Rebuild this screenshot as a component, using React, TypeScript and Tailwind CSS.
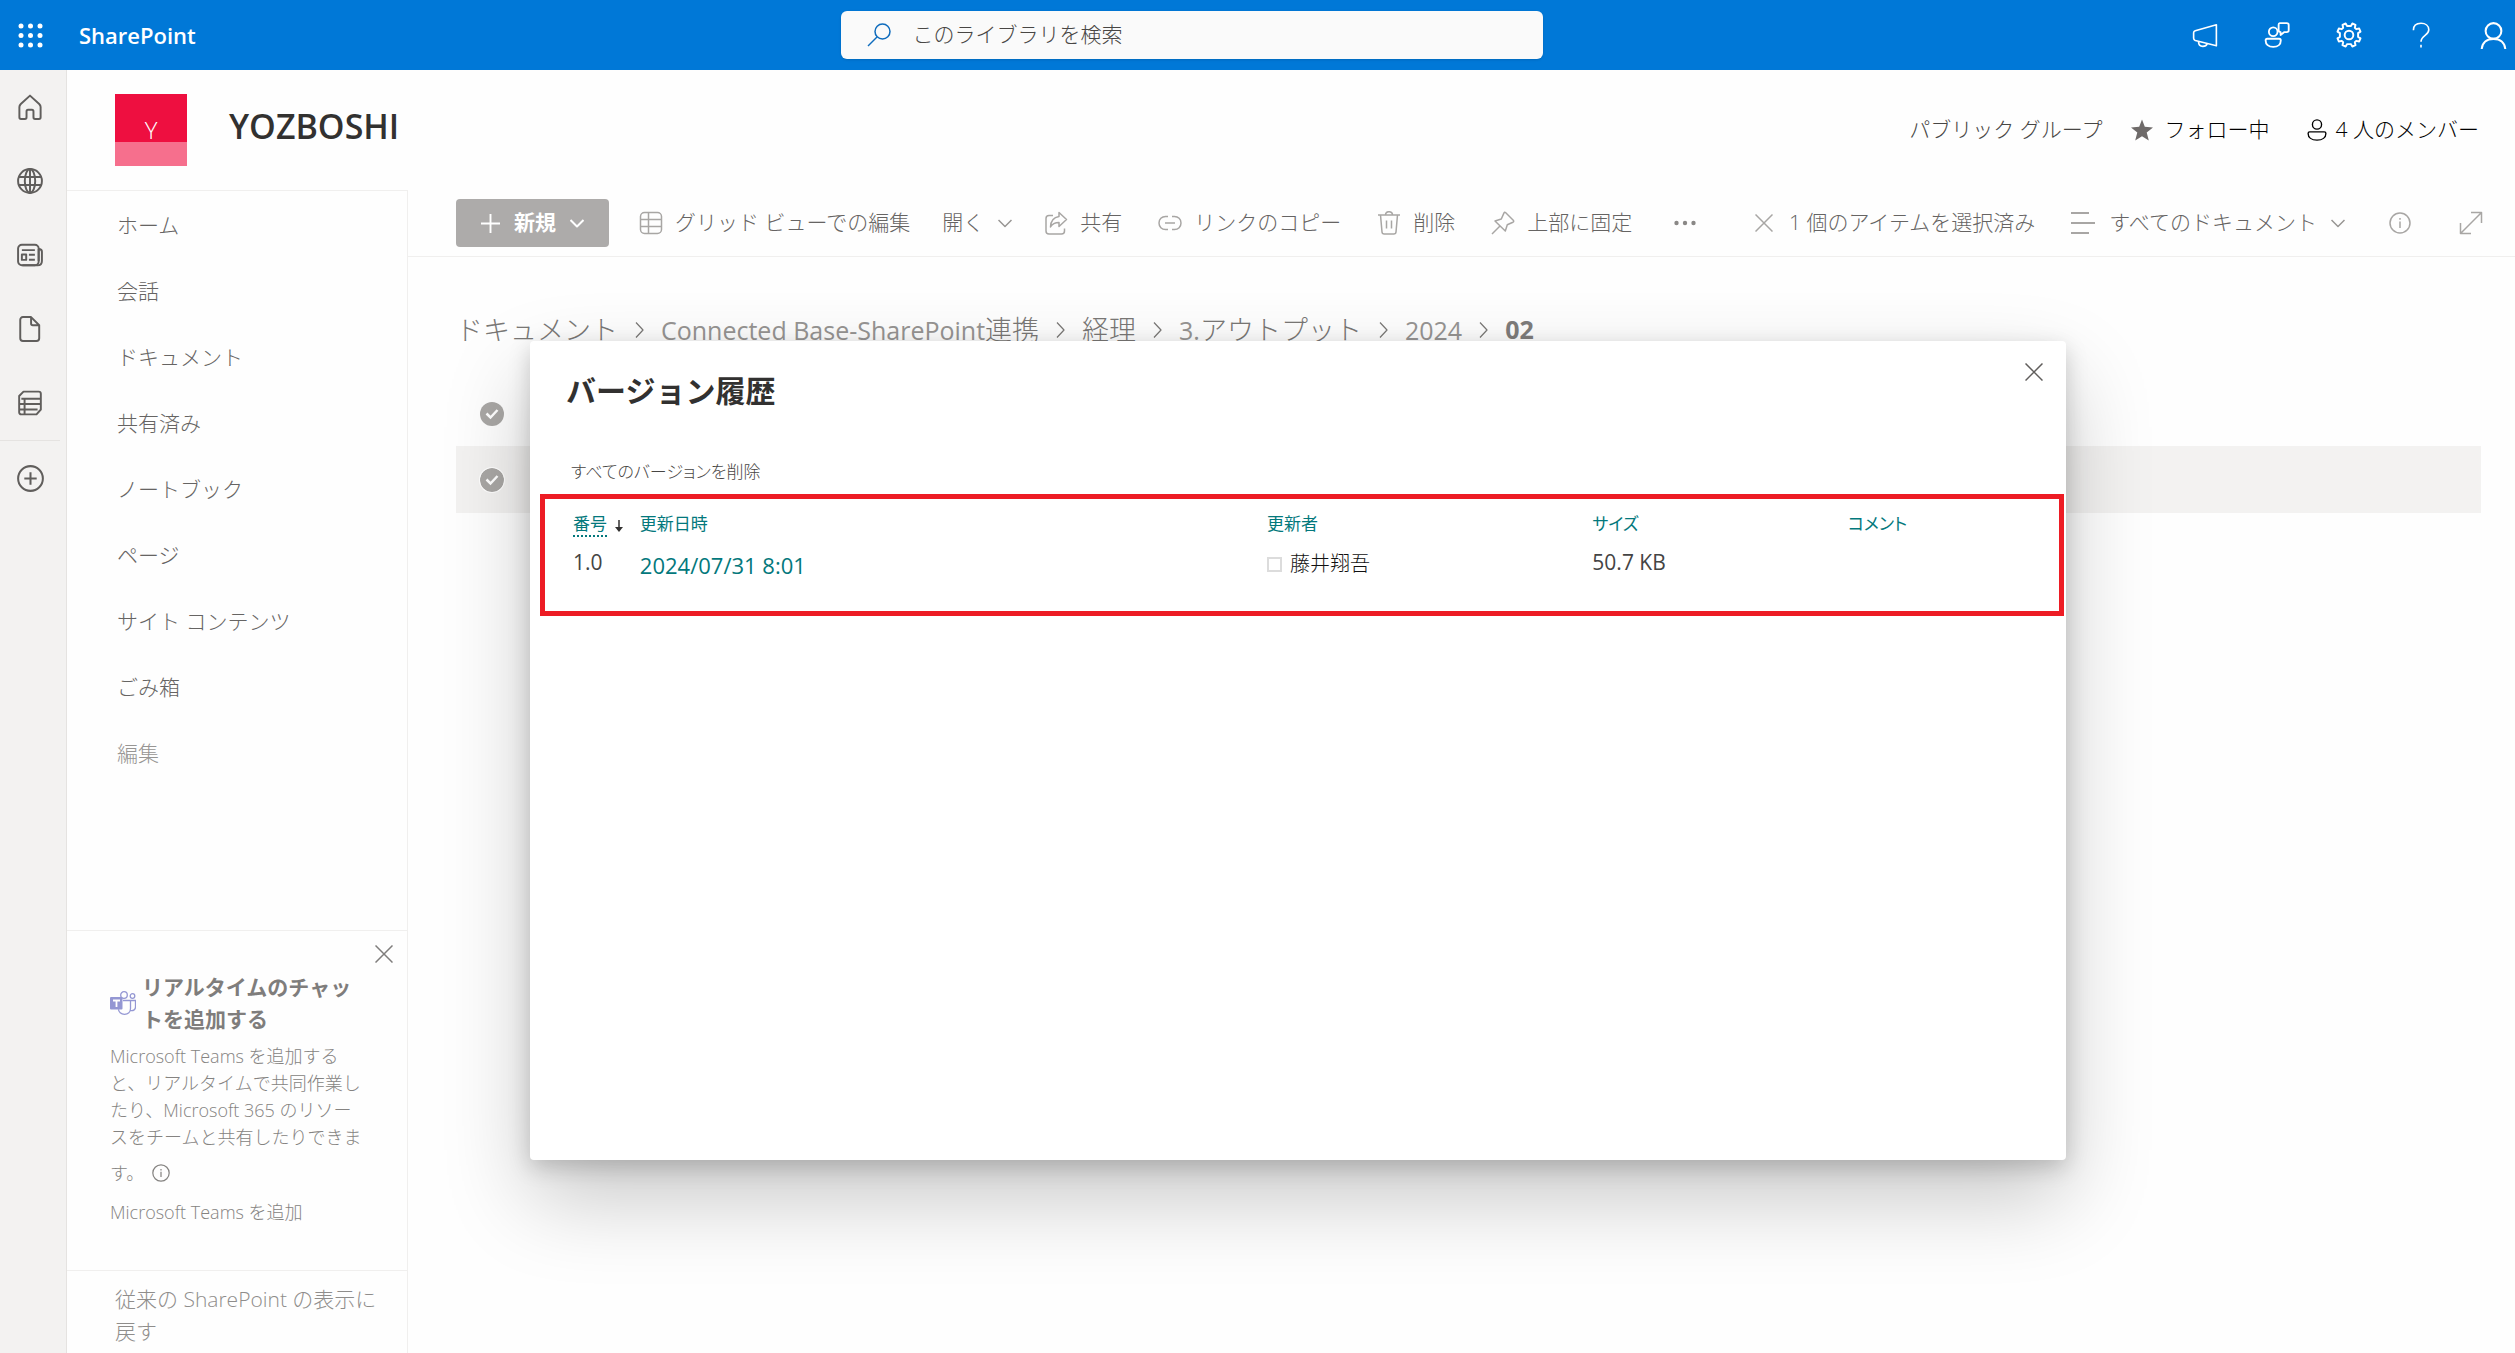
import type { ReactNode } from "react";

type IconProps = {
  className: string;
  box?: string;
  width?: number;
  children: ReactNode;
};

function Icon({ className, box = "0 0 24 24", width = 1.5, children }: IconProps) {
  return (
    <svg
      className={className}
      viewBox={box}
      fill="none"
      stroke="currentColor"
      strokeWidth={width}
      strokeLinejoin="round"
      aria-hidden="true"
    >
      {children}
    </svg>
  );
}

function Cross({ className }: { className: string }) {
  return (
    <Icon className={className} box="0 0 18 18" width={1.5}>
      <path d="M.5.5l17 17M17.5.5l-17 17" />
    </Icon>
  );
}

function ChevronDown({ className, width = 1.5 }: { className: string; width?: number }) {
  return (
    <Icon className={className} box="0 0 14 14" width={width}>
      <path d="M.5 4L7 10.5 13.5 4" />
    </Icon>
  );
}

function InfoCircle({ className }: { className: string }) {
  return (
    <Icon className={className} box="0 0 22 22">
      <circle cx="11" cy="11" r="10" />
      <path d="M11 9.5v6.5M11 6v1.8" />
    </Icon>
  );
}

const railItems: { label: string; icon: ReactNode }[] = [
  {
    label: "ホーム",
    icon: (
      <path d="M12 1.500L3.500 9.200C2.700 10 2.200 11 2.200 12.100v9.400c0 .9.600 1.500 1.500 1.500h3.600c.9 0 1.500-.6 1.500-1.500v-5.300c0-1 .6-1.600 1.400-1.600h3.600c.8 0 1.400.6 1.400 1.600v5.300c0 .9.600 1.500 1.500 1.500h3.600c.9 0 1.500-.6 1.500-1.500v-9.400c0-1.100-.5-2.100-1.300-2.900z" />
    ),
  },
  {
    label: "サイト",
    icon: (
      <>
        <circle cx="12" cy="12" r="11" />
        <ellipse cx="12" cy="12" rx="4.800" ry="11" />
        <path d="M1.800 8.300h20.400M1.800 15.700h20.400M12 1v22" />
      </>
    ),
  },
  {
    label: "ニュース",
    icon: (
      <>
        <rect x="1" y="2.500" width="19" height="19" rx="3.500" />
        <path d="M20 6.500c1.800 0 3 .8 3 2.500v8.500c0 2.500-1.500 4-4 4H5M20 6.500v11M4.500 7.500h12M4.500 11.500h4v5h-4zM11 11.800h5.500M11 16.300h5.500" />
      </>
    ),
  },
  {
    label: "ファイル",
    icon: (
      <path d="M5.500 1H13l7.500 7.500V20.500c0 1.500-1 2.500-2.500 2.500H5.500C4 23 3 22 3 20.500v-17C3 2 4 1 5.500 1zM13 1v6c0 1 .6 1.600 1.600 1.600h5.800" />
    ),
  },
  {
    label: "リスト",
    icon: (
      <path d="M6 1.500h14c1.300 0 2 .8 2 2V18l-4 4.500H4c-1.300 0-2-.8-2-2V5.500zM4 8h18M2 13h20M2 18h17M7 8v14" />
    ),
  },
];

const navItems = [
  "ホーム",
  "会話",
  "ドキュメント",
  "共有済み",
  "ノートブック",
  "ページ",
  "サイト コンテンツ",
  "ごみ箱",
];

const crumbs: { latin: string; text: string }[] = [
  { latin: "", text: "ドキュメント" },
  { latin: "Connected Base-SharePoint", text: "連携" },
  { latin: "", text: "経理" },
  { latin: "3.", text: "アウトプット" },
  { latin: "2024", text: "" },
];

function TopBar() {
  return (
    <header className="grid h-[70px] grid-cols-[1fr_702px_1fr] items-center bg-[#0078d7] text-white">
      <div className="flex items-center gap-9 pl-[18px]">
        <button type="button" aria-label="アプリ起動ツール">
          <svg viewBox="0 0 25 25" className="size-[25px]" fill="currentColor" aria-hidden="true">
            {[3, 12.5, 22].map((y) =>
              [3, 12.5, 22].map((x) => <circle key={`${x}-${y}`} cx={x} cy={y} r="2.500" />)
            )}
          </svg>
        </button>
        <a href="#" className="text-[22px] font-semibold">
          SharePoint
        </a>
      </div>
      <label className="relative -left-[66px] flex h-12 items-center gap-[22px] rounded-md bg-[#fafafa] px-[26px] shadow">
        <Icon className="size-6 shrink-0 text-[#0f6cbd]">
          <circle cx="15.500" cy="8.500" r="7.500" />
          <path d="M10 14L1 23" />
        </Icon>
        <input
          type="search"
          aria-label="このライブラリを検索"
          placeholder="このライブラリを検索"
          className="w-full bg-transparent text-[21px] text-gray-700 outline-none placeholder:text-[#484644]"
        />
      </label>
      <div className="flex items-center justify-end gap-[46px] pr-2">
        <button type="button" aria-label="お知らせ">
          <Icon className="size-[26px]">
            <path d="M22.500 2.500v19.500L3 17c-.9-.3-1.500-1-1.500-2v-5c0-1 .6-1.700 1.500-2zM6 18c0 3 1.500 4.500 4 4.500s3.500-1 4-2.300" />
          </Icon>
        </button>
        <button type="button" aria-label="フィードバック">
          <Icon className="size-[26px]" width={1.7}>
            <circle cx="8.500" cy="9" r="4" />
            <path d="M3 15.500h11c.9 0 1.500.6 1.500 1.500 0 3.500-2.500 6-7 6s-7-2.500-7-6c0-.9.600-1.500 1.500-1.500zM14.500 1H21c1 0 1.800.7 1.800 1.700v5c0 1-.8 1.700-1.800 1.700h-2.500L15.300 12V9.300C14 9.200 13.500 8.500 13.500 7.700V2.500c0-.9.400-1.500 1-1.500z" />
          </Icon>
        </button>
        <button type="button" aria-label="設定">
          <Icon className="size-[26px]" width={1.8}>
            <circle cx="12" cy="12" r="4" />
            <path d="M10.200 3.600L8.900 1.400 6 2.600l.6 2.700-1.300 1.300-2.700-.6L1.400 8.900l2.200 1.400v3.400l-2.200 1.400 1.200 2.900 2.700-.6 1.300 1.300-.6 2.700 2.900 1.200 1.400-2.200h3.400l1.400 2.200 2.900-1.200-.6-2.700 1.300-1.300 2.700.6 1.200-2.900-2.200-1.400v-3.400l2.200-1.400L21.400 6l-2.700.6-1.300-1.300.6-2.700-2.900-1.200-1.300 2.200z" />
          </Icon>
        </button>
        <button type="button" aria-label="ヘルプ">
          <Icon className="size-[26px]">
            <path d="M5 7.500C5 3.500 7.800 1.200 12 1.200s7.200 2.400 7.200 6c0 5.300-7.200 5-7.200 11M12 21v2.500" />
          </Icon>
        </button>
        <button type="button" aria-label="アカウント">
          <Icon className="size-[27px]" width={1.8}>
            <circle cx="12" cy="8" r="7" />
            <path d="M1.500 24C2 18.500 6 15 12 15s10 3.500 10.500 9" />
          </Icon>
        </button>
      </div>
    </header>
  );
}

function Rail() {
  return (
    <nav aria-label="アプリ バー" className="w-[67px] shrink-0 border-r border-[#e5e3e1] bg-[#f3f2f1] text-[#605e5c]">
      <div className="mr-[6px] flex flex-col items-center border-b border-[#e5e3e1]">
        {railItems.map(({ label, icon }) => (
          <button key={label} type="button" aria-label={label} className="flex h-[74px] w-full items-center justify-center">
            <Icon className="size-[26px]" width={1.8}>
              {icon}
            </Icon>
          </button>
        ))}
      </div>
      <button type="button" aria-label="作成" className="flex h-[74px] w-[60px] items-center justify-center">
        <Icon className="size-[27px]" width={1.8}>
          <circle cx="12" cy="12" r="11" />
          <path d="M12 6.500v11M6.500 12h11" />
        </Icon>
      </button>
    </nav>
  );
}

function SiteHeader() {
  return (
    <div className="flex h-[120px] items-center pr-9 pl-12">
      <div className="flex size-[72px] flex-col bg-[#ee0f40] text-white">
        <div className="flex h-12 items-end justify-center text-2xl/6">Y</div>
        <div className="h-6 bg-[#f66f8d]" />
      </div>
      <h1 className="mb-2 ml-[42px] text-[34px] font-semibold text-[#323130]">YOZBOSHI</h1>
      <div className="ml-auto flex items-center text-[21px]">
        <span className="text-[#484644]">パブリック グループ</span>
        <button type="button" className="ml-7 flex items-center gap-3 text-black">
          <svg viewBox="0 0 22 21" className="size-[22px] text-[#6e6a69]" fill="currentColor" aria-hidden="true">
            <path d="M11 0l2.800 7.300L22 8l-6.300 5 2.100 8L11 16.700 4.200 21l2.100-8L0 8l8.200-.7z" />
          </svg>
          フォロー中
        </button>
        <button type="button" className="ml-9 flex items-center gap-2 text-black">
          <Icon className="size-[22px]">
            <circle cx="12" cy="6" r="5" />
            <path d="M4 14h16c1 0 1.700.7 1.700 1.700C21.700 20 18 23 12 23s-9.700-3-9.700-7.300c0-1 .7-1.700 1.700-1.700z" />
          </Icon>
          4 人のメンバー
        </button>
      </div>
    </div>
  );
}

function Sidebar() {
  return (
    <aside className="flex w-[341px] shrink-0 flex-col border-t border-r border-[#f0efee]">
      <nav aria-label="サイト" className="flex flex-1 flex-col pt-[2px] text-[21px]">
        {navItems.map((item) => (
          <a key={item} href="#" className="flex h-[66px] items-center pl-[50px] text-[#666463]">
            {item}
          </a>
        ))}
        <button type="button" className="flex h-[66px] items-center pl-[50px] text-[#979593]">
          編集
        </button>
      </nav>
      <section className="border-t border-[#f0efee] pr-[14px] pb-11 pl-[43px]">
        <div className="flex justify-end pt-[14px]">
          <button type="button" aria-label="閉じる">
            <Cross className="size-[18px] text-[#7f7d7c]" />
          </button>
        </div>
        <div className="mt-2 flex items-center gap-[6px]">
          <svg viewBox="0 0 26 24" className="h-6 w-[26px] shrink-0 text-[#9497d3]" fill="none" stroke="currentColor" strokeWidth="1.300" aria-hidden="true">
            <circle cx="14" cy="4" r="3.300" />
            <circle cx="22.500" cy="5" r="2.300" />
            <path d="M13 9.500h7.500v8c0 3.500-2.500 5.800-6 5.800s-6-2.300-6-5M20.500 9.500h5v6.500c0 2.500-2 4-5 3.500" />
            <rect x="0" y="6" width="12.500" height="12.500" rx="1" fill="currentColor" stroke="none" />
            <path d="M3 9.500h7M6.500 9.500v6.500" stroke="#fff" strokeWidth="1.800" />
          </svg>
          <h2 className="text-[21px]/8 font-bold whitespace-nowrap text-[#7f7d7c]">
            リアルタイムのチャッ
            <br />
            トを追加する
          </h2>
        </div>
        <p className="mt-2 text-lg/[27px] whitespace-nowrap text-[#858381]">
          Microsoft Teams を追加する
          <br />
          と、リアルタイムで共同作業し
          <br />
          たり、Microsoft 365 のリソー
          <br />
          スをチームと共有したりできま
        </p>
        <div className="flex h-11 items-center gap-2 text-lg text-[#858381]">
          す。
          <button type="button" aria-label="詳細情報">
            <InfoCircle className="size-[18px]" />
          </button>
        </div>
        <a href="#" className="mt-1 block text-lg/[27px] text-[#858381]">
          Microsoft Teams を追加
        </a>
      </section>
      <a href="#" className="border-t border-[#f0efee] pt-3 pb-[6px] pl-12 text-[21px]/8 whitespace-nowrap text-[#8f8d8b]">
        従来の SharePoint の表示に
        <br />
        戻す
      </a>
    </aside>
  );
}

function Toolbar() {
  return (
    <div className="flex h-[67px] items-center border-b border-[#f0efee] pr-8 pl-12 text-[21px] whitespace-nowrap text-[#666463]">
      <button type="button" className="flex h-12 w-[153px] items-center justify-center gap-[14px] rounded bg-[#adabaa] font-bold text-white">
        <Icon className="size-[19px]" box="0 0 18 18" width={1.8}>
          <path d="M9 0v18M0 9h18" />
        </Icon>
        新規
        <ChevronDown className="size-[14px]" width={2} />
      </button>
      <button type="button" className="ml-[30px] flex items-center gap-3">
        <Icon className="size-6 text-[#a8a6a4]">
          <rect x="1.500" y="1.500" width="21" height="21" rx="4" />
          <path d="M1.500 8.500h21M1.500 15.500h21M9.500 1.500v21" />
        </Icon>
        グリッド ビューでの編集
      </button>
      <button type="button" className="ml-8 flex items-center gap-[14px]">
        開く
        <ChevronDown className="size-[14px] text-[#979593]" />
      </button>
      <button type="button" className="ml-8 flex items-center gap-3">
        <Icon className="size-6 text-[#a8a6a4]">
          <path d="M9 4.500H5C3 4.500 2 5.500 2 7.500V20c0 2 1 3 3 3h12.500c2 0 3-1 3-3v-2.500M15 1.500l7.500 7-7.500 7v-4c-4 0-6.800 1.500-8.500 4.500.3-6.200 3.500-9.800 8.500-10.500z" />
        </Icon>
        共有
      </button>
      <button type="button" className="ml-9 flex items-center gap-3">
        <Icon className="size-6 text-[#a8a6a4]">
          <path d="M10 5.500H7.500C3.800 5.500 1 8.200 1 12s2.800 6.500 6.500 6.500H10M14 5.500h2.500c3.700 0 6.500 2.700 6.500 6.500s-2.800 6.500-6.500 6.500H14M7 12h10" />
        </Icon>
        リンクのコピー
      </button>
      <button type="button" className="ml-9 flex items-center gap-3">
        <Icon className="size-6 text-[#a8a6a4]">
          <path d="M1 4h22M8.500 4c0-2 1.300-3.300 3.500-3.300S15.500 2 15.500 4M3.500 4L5 21c.1 1.200 1 2 2.200 2h9.600c1.200 0 2.100-.8 2.200-2l1.500-17M9.500 9.500v8M14.500 9.500v8" />
        </Icon>
        削除
      </button>
      <button type="button" className="ml-9 flex items-center gap-3">
        <Icon className="size-6 text-[#a8a6a4]">
          <path d="M14.500 1.500l8 8c.4.700.2 1.300-.6 1.700l-5.600 2.600-2 6.200L4 10l6.300-2 2.600-5.900c.4-.9 1-1.100 1.600-.6zM9 15l-8 8" />
        </Icon>
        上部に固定
      </button>
      <button type="button" aria-label="その他" className="ml-[42px]">
        <svg viewBox="0 0 22 6" className="h-[6px] w-[22px] text-[#8a8886]" fill="currentColor" aria-hidden="true">
          <circle cx="2.500" cy="3" r="2.200" />
          <circle cx="11" cy="3" r="2.200" />
          <circle cx="19.500" cy="3" r="2.200" />
        </svg>
      </button>
      <button type="button" className="ml-auto flex items-center gap-4">
        <Cross className="size-[18px] text-[#a8a6a4]" />
        1 個のアイテムを選択済み
      </button>
      <button type="button" className="ml-9 flex items-center gap-[14px]">
        <Icon className="size-6 text-[#a8a6a4]" width={1.8}>
          <path d="M0 2h18M0 12h24M0 22h18" />
        </Icon>
        すべてのドキュメント
        <ChevronDown className="size-[14px] text-[#979593]" />
      </button>
      <button type="button" aria-label="詳細ウィンドウ" className="ml-11">
        <InfoCircle className="size-[22px] text-[#a8a6a4]" />
      </button>
      <button type="button" aria-label="全画面表示" className="ml-12">
        <Icon className="size-6 text-[#a8a6a4]">
          <path d="M1.500 22.500l21-21M12 1.500h10.500V12M1.500 12v10.500H12" />
        </Icon>
      </button>
    </div>
  );
}

function RowCheck({ label, ring }: { label: string; ring?: boolean }) {
  return (
    <button type="button" role="checkbox" aria-checked="true" aria-label={label} className="ml-6">
      <svg viewBox="0 0 24 24" className={ring ? "size-6 rounded-full ring-1 ring-white" : "size-6"} aria-hidden="true">
        <circle cx="12" cy="12" r="12" fill="#a9a7a5" />
        <path d="M6.500 11.500l4 4 7-7.500" fill="none" stroke="#fff" strokeWidth="2.500" />
      </svg>
    </button>
  );
}

function Library() {
  return (
    <main className="min-w-0 flex-1">
      <Toolbar />
      <nav aria-label="階層リンク" className="mt-[53px] flex h-10 items-center pl-12 text-[27px] whitespace-nowrap text-[#7a7876]">
        {crumbs.map(({ latin, text }) => (
          <span key={latin + text} className="flex items-center">
            <a href="#">
              <span className="text-[25px] font-normal text-[#979593]">{latin}</span>
              {text}
            </a>
            <Icon className="mx-[17px] h-[18px] w-[9px]" box="0 0 9 18" width={1.2}>
              <path d="M1 1.500L8 9l-7 7.500" />
            </Icon>
          </span>
        ))}
        <span className="text-[25px] font-bold text-[#7f7d7c]">02</span>
      </nav>
      <div className="mt-8 mr-[34px] ml-12">
        <div className="flex h-16 items-center">
          <RowCheck label="すべて選択" />
        </div>
        <div className="flex h-[67px] items-center bg-[#f3f2f1]">
          <RowCheck label="アイテムを選択" ring />
        </div>
      </div>
    </main>
  );
}

function VersionDialog() {
  return (
    <section
      role="dialog"
      aria-label="バージョン履歴"
      className="absolute top-[341px] right-[449px] bottom-[193px] left-[530px] rounded bg-white shadow-[0_38px_86px_rgba(0,0,0,0.22),0_7px_22px_rgba(0,0,0,0.18)]"
    >
      <div className="flex items-start justify-between pt-[22px] pr-[23px] pl-9">
        <h2 className="mt-2 text-[30px]/10 font-bold text-[#323130]">バージョン履歴</h2>
        <button type="button" aria-label="閉じる">
          <Cross className="size-[18px] text-[#605e5c]" />
        </button>
      </div>
      <a href="#" className="mt-[46px] ml-[41px] block text-[17px]/[30px] text-[#484644] [font-feature-settings:'palt']">
        すべてのバージョンを削除
      </a>
      <div className="mt-[7px] mr-[2px] ml-[10px] h-[122px] border-[5px] border-[#ed1c24] pt-[10px] pl-7">
        <table className="w-full table-fixed text-left">
          <thead>
            <tr className="h-[30px] text-[17px] text-[#03787c] [font-feature-settings:'palt']">
              <th className="w-[4.5%] font-normal whitespace-nowrap">
                <a href="#" className="border-b-2 border-dotted border-[#03787c]">番号</a>
                <svg viewBox="0 0 8 14" className="ml-2 inline h-[14px] w-2 text-[#323130]" aria-hidden="true">
                  <path d="M4 1v9" stroke="currentColor" strokeWidth="1.500" />
                  <path d="M0 8h8l-4 5z" fill="currentColor" />
                </svg>
              </th>
              <th className="w-[42.2%] font-normal"><a href="#">更新日時</a></th>
              <th className="w-[21.9%] font-normal"><a href="#">更新者</a></th>
              <th className="w-[17.2%] font-normal"><a href="#">サイズ</a></th>
              <th className="font-normal"><a href="#">コメント</a></th>
            </tr>
          </thead>
          <tbody>
            <tr className="h-12 text-[21px] font-normal text-[#444]">
              <td>1.0</td>
              <td className="pt-1 text-[22px]"><a href="#" className="text-[#03787c]">2024/07/31 8:01</a></td>
              <td>
                <span className="flex items-center gap-2 pt-[2px] text-[20px] font-light text-[#111]">
                  <span className="size-[15px] border-2 border-[#dcdcdc]" />
                  <a href="#">藤井翔吾</a>
                </span>
              </td>
              <td>50.7 KB</td>
              <td />
            </tr>
          </tbody>
        </table>
      </div>
    </section>
  );
}

export default function App() {
  return (
    <div className="relative flex min-h-screen flex-col overflow-hidden bg-[#fefefe] font-['Open_Sans','Noto_Sans_CJK_JP',sans-serif] font-light">
      <TopBar />
      <div className="flex flex-1">
        <Rail />
        <div className="flex min-w-0 flex-1 flex-col">
          <SiteHeader />
          <div className="flex flex-1">
            <Sidebar />
            <Library />
          </div>
        </div>
      </div>
      <VersionDialog />
    </div>
  );
}
